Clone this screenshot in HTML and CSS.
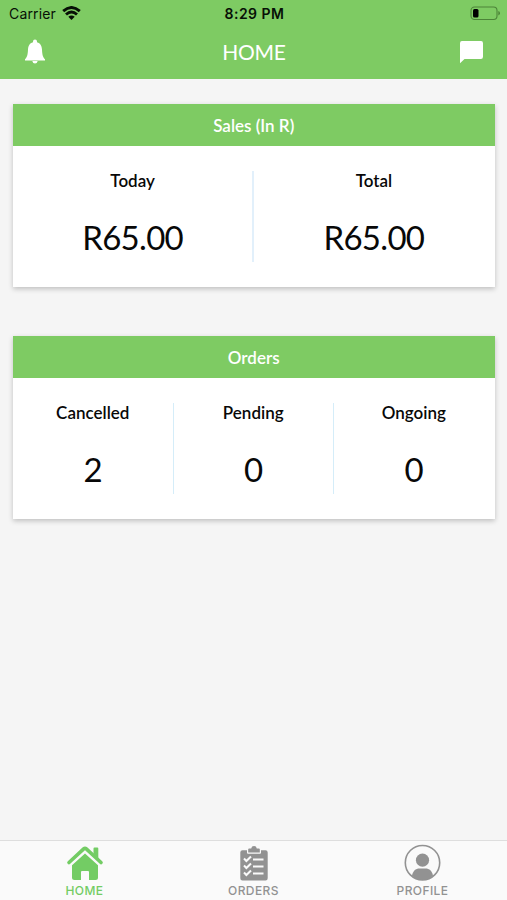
FILE: index.html
```html
<!DOCTYPE html>
<html lang="en">
<head>
<meta charset="utf-8">
<title>Home</title>
<link rel="stylesheet" href="styles.css">
</head>
<body>
<header class="top">
  <div class="status">
    <div class="carrier"><span>Carrier</span>
      <svg width="19" height="15" viewBox="0 0 19 15" fill="none" stroke="#071006" stroke-width="2.9"><path d="M1.200 5.200Q9.500-2.200 17.800 5.200M4 8.500Q9.500 3.500 15 8.500"/><path d="M6.300 10.800Q9.500 8 12.700 10.800L9.500 14Z" fill="#071006" stroke="none"/></svg>
    </div>
    <span class="time">8:29 PM</span>
    <svg class="battery" width="30" height="15" viewBox="0 0 30 15"><rect x="1" y="1" width="26" height="12.500" rx="3.500" fill="none" stroke="#4c8438" stroke-width="1.100"/><rect x="3" y="3" width="5.500" height="8.500" rx="1.500"/><path d="M28.300 5q1.700.6 1.700 2.200t-1.700 2.200z" fill="#4c8438"/></svg>
  </div>
  <div class="bar">
    <svg width="20" height="26" viewBox="0 0 20 26" fill="#fff"><path d="M10 .5a2 2 0 0 1 2 2v.8c3.500 1 4.800 3.700 5 7.200.2 5 .8 7.500 3 9.800v1.200H0v-1.200c2.200-2.300 2.800-4.800 3-9.800.2-3.500 1.500-6.200 5-7.200v-.8a2 2 0 0 1 2-2zM7.300 21.900h5.400q-.6 2.600-2.700 2.600t-2.700-2.600z"/></svg>
    <h1>HOME</h1>
    <svg width="23" height="23" viewBox="0 0 23 23" fill="#fff"><path d="M2.300 0h18.400A2.200 2.200 0 0 1 23 2.200v13.600a2.200 2.200 0 0 1-2.300 2.200H4.500L0 22.300V2.200A2.200 2.200 0 0 1 2.300 0z"/></svg>
  </div>
</header>
<main>
  <section class="card">
    <h2>Sales (In R)</h2>
    <div class="stats halves">
      <div class="stat"><h3>Today</h3><p>R65.00</p></div>
      <div class="stat"><h3>Total</h3><p>R65.00</p></div>
    </div>
  </section>
  <section class="card">
    <h2>Orders</h2>
    <div class="stats">
      <div class="stat"><h3>Cancelled</h3><p>2</p></div>
      <div class="stat"><h3>Pending</h3><p>0</p></div>
      <div class="stat"><h3>Ongoing</h3><p>0</p></div>
    </div>
  </section>
</main>
<nav class="tabs">
  <a class="tab active">
    <svg width="38" height="38" viewBox="0 0 38 38"><path d="M3 18.500 17.700 4.900q1.300-1.200 2.600 0L35 18.500" fill="none" stroke="currentColor" stroke-width="3.600" stroke-linecap="round" stroke-linejoin="round"/><path d="M27.500 4.500q0-1 1-1h2.800q1 0 1 1v9.800l-4.800-4.400zM19 9.500 32 21.300v12.200q0 2.500-2.500 2.500H23v-8q0-1-1-1h-6q-1 0-1 1v8H8.500Q6 36 6 33.500V21.300z" fill="currentColor"/></svg>
    <span>HOME</span>
  </a>
  <a class="tab">
    <svg width="38" height="38" viewBox="0 0 38 38"><path d="M7.500 6.300H12v2.500q0 1 1 1h12q1 0 1-1V6.300h4.500q2.200 0 2.200 2.200v25.700q0 2.200-2.200 2.200h-23q-2.200 0-2.200-2.200V8.500q0-2.200 2.200-2.200z" fill="currentColor"/><path d="M13.200 8.600V5.300q0-.9.900-.9h2.100Q16.600 2 19 2t2.800 2.400h2.100q.9 0 .9.900v3.300z" fill="currentColor"/><path d="m9 14.500 2.400 2.500 4.600-4.500M9 21.500l2.400 2.500 4.600-4.500M9 28.500l2.400 2.500 4.600-4.500M18 15.500h10.500M18 22.500h10.500M18 29.500h10.500" fill="none" stroke="#fafafa" stroke-width="2"/></svg>
    <span>ORDERS</span>
  </a>
  <a class="tab">
    <svg width="38" height="38" viewBox="0 0 38 38"><circle cx="18.500" cy="18.700" r="17.200" fill="none" stroke="currentColor" stroke-width="1.600"/><circle cx="18.500" cy="16.200" r="6.600" fill="currentColor"/><path d="M8 31.800C8.700 27 11.700 24.500 15.500 24.500h6c3.800 0 6.800 2.500 7.500 7.300Q24.500 36 18.500 36T8 31.800z" fill="currentColor"/></svg>
    <span>PROFILE</span>
  </a>
</nav>
</body>
</html>
```

FILE: styles.css
```css
* { box-sizing: border-box; margin: 0; }
body {
  height: 900px;
  display: flex;
  flex-direction: column;
  background: #f5f5f5;
  color: #080808;
  font-family: Lato, sans-serif;
  overflow: hidden;
}
svg { display: block; flex: none; }
.top { height: 79px; background: #7ecb63; flex: none; }
.status {
  height: 27px;
  padding: 0 7px 0 9px;
  display: grid;
  grid-template-columns: 1fr auto 1fr;
  align-items: center;
  font: 14px/27px Inter, sans-serif;
  color: #071006;
}
.carrier { display: flex; align-items: center; gap: 6px; letter-spacing: .15px; }
.time { font-weight: 600; letter-spacing: .5px; }
.battery { justify-self: end; }
.bar {
  height: 50px;
  padding: 0 24px 0 25px;
  display: flex;
  justify-content: space-between;
  align-items: center;
}
.bar h1 {
  padding-left: 3px;
  font-weight: 400;
  font-size: 21px;
  line-height: 50px;
  letter-spacing: -.3px;
  color: #fff;
}
main { flex: 1; padding: 25px 12.500px 0 13px; }
.card {
  height: 183px;
  margin-bottom: 49px;
  background: #fff;
  box-shadow: 0 2px 5px rgba(0, 0, 0, .22);
}
.card h2 {
  height: 42px;
  line-height: 43px;
  background: #7ecb63;
  color: #fff;
  text-align: center;
  font-size: 17px;
  font-weight: 600;
}
.stats { display: flex; padding: 25px 1px 0 0; }
.stat { flex: 1; height: 91px; text-align: center; }
.stat:not(:last-child) { border-right: 1px solid #d5edf9; }
.halves .stat:first-child { border-right: 2px solid #e2f0fb; }
.stat h3 { font-size: 17px; line-height: 20px; font-weight: 600; }
.stat p {
  font-size: 33px;
  line-height: 40px;
  margin-top: 26px;
  letter-spacing: -.7px;
}
.tabs {
  height: 60px;
  flex: none;
  display: grid;
  grid-template-columns: repeat(3, 1fr);
  background: #fafafa;
  border-top: 1px solid #dedede;
}
.tab {
  display: flex;
  flex-direction: column;
  align-items: center;
  padding-top: 3px;
  color: #929292;
  font: 500 12px/18px Inter, sans-serif;
  letter-spacing: .4px;
}
.active { color: #73cc64; }
```
